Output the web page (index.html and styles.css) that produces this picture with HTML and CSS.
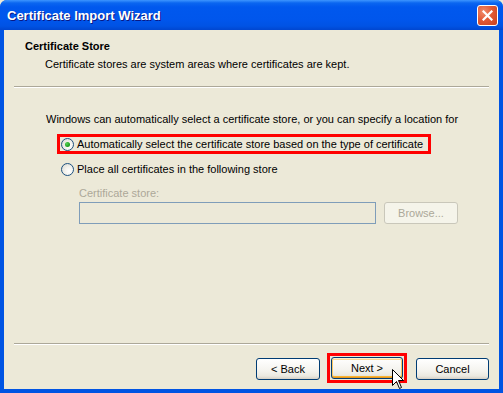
FILE: index.html
```html
<!DOCTYPE html>
<html lang="en">
<head>
    <meta charset="UTF-8" />
    <meta name="viewport" content="width=device-width, initial-scale=1.0" />
    <title>Certificate Import Wizard</title>
    <link rel="stylesheet" href="styles.css">
</head>
<body>
<div class="window">
    <div class="titlebar">
        <span class="title">Certificate Import Wizard</span>
        <button class="close-btn" aria-label="Close">
            <svg width="11" height="11" viewBox="0 0 11 11">
                <path d="M1.5 1.5 L9.5 9.5 M9.5 1.5 L1.5 9.5" stroke="#fff" stroke-width="2.2" stroke-linecap="square" />
            </svg>
        </button>
    </div>

    <div class="frame">
        <div class="header">
            <div class="header-title">Certificate Store</div>
            <div class="header-sub">Certificate stores are system areas where certificates are kept.</div>
        </div>
        <div class="sep"></div>

        <div class="content">
            <p class="intro">Windows can automatically select a certificate store, or you can specify a location for</p>
            <label class="option marked">
                <span class="radio checked"></span>Automatically select the certificate store based on the type of certificate
            </label>
            <label class="option">
                <span class="radio"></span>Place all certificates in the following store
            </label>
            <div class="store">
                <div class="store-label">Certificate store:</div>
                <div class="store-row">
                    <div class="store-input"></div>
                    <button class="btn btn-browse" disabled>Browse...</button>
                </div>
            </div>
        </div>

        <div class="sep"></div>
        <div class="footer">
            <button class="btn btn-back">&lt; Back</button>
            <span class="next-mark">
                <button class="btn btn-next">Next &gt;</button>
                <svg class="cursor" width="13" height="21" viewBox="0 0 13 21">
                    <path d="M0.5 0.5 L0.5 16.5 L4.5 12.5 L7.5 19.5 L9.5 18.5 L6.5 11.5 L11.5 11.5 Z" fill="#fff" stroke="#000" stroke-width="1" />
                </svg>
            </span>
            <button class="btn btn-cancel">Cancel</button>
        </div>
    </div>
</div>
</body>
</html>
```

FILE: styles.css
```css
* { margin: 0; padding: 0; box-sizing: border-box; }
body {
    width: 503px;
    height: 393px;
    overflow: hidden;
    background: #ece9d8;
    font-family: 'Liberation Sans', Arial, sans-serif;
    font-size: 11px;
    line-height: 13px;
    color: #000;
}
.window {
    width: 503px;
    height: 393px;
    display: flex;
    flex-direction: column;
    background: #0054e3;
    border-radius: 7px 7px 0 0;
    overflow: hidden;
}
.titlebar {
    height: 30px;
    flex: none;
    display: flex;
    align-items: center;
    justify-content: space-between;
    padding: 0 5px 0 7px;
    background: linear-gradient(to bottom, #3d95ff 0, #0a66f0 3px, #0058ee 7px, #0056ec 20px, #0053e4 26px, #0046d0 30px);
}
.title {
    color: #fff;
    font-family: 'Liberation Sans', Arial, sans-serif;
    font-weight: bold;
    font-size: 13px;
    text-shadow: 1px 1px 0 #0a1883;
    padding-top: 1px;
}
.close-btn {
    width: 21px;
    height: 21px;
    border: 1px solid #fff;
    border-radius: 3px;
    background: radial-gradient(circle at 30% 30%, #f08c6c 0, #e25a36 45%, #c7401e 100%);
    display: flex;
    align-items: center;
    justify-content: center;
    margin-top: 1px;
}
.frame {
    flex: 1;
    display: flex;
    flex-direction: column;
    background: #ece9d8;
    border: 4px solid #0054e3;
    border-top: 0;
}
.header {
    height: 56px;
    padding: 10px 0 0 21px;
}
.header-title {
    font-weight: bold;
}
.header-sub {
    margin-top: 5px;
    padding-left: 20px;
}
.sep {
    height: 2px;
    margin: 0 10px;
    border-top: 1px solid #aca899;
    border-bottom: 1px solid #fff;
    flex: none;
}
.content {
    flex: 1;
    padding: 25px 0 0 42px;
}
.intro {
    margin-bottom: 8px;
}
.option {
    display: flex;
    align-items: center;
    gap: 3px;
    width: 374px;
    height: 20px;
    margin-left: 11px;
    padding-left: 1px;
    border: 3px solid transparent;
}
.option + .option {
    margin-top: 5px;
}
.option.marked {
    border-color: #ff0000;
}
.radio {
    width: 13px;
    height: 13px;
    border-radius: 50%;
    border: 1px solid #1c5180;
    background: radial-gradient(circle at 65% 65%, #ffffff 0, #f4f3ee 40%, #d6d4cb 100%);
    display: flex;
    align-items: center;
    justify-content: center;
    flex: none;
}
.radio.checked::after {
    content: '';
    width: 5px;
    height: 5px;
    border-radius: 50%;
    background: radial-gradient(circle at 35% 35%, #55d255 0, #21a121 60%, #1a861a 100%);
}
.store {
    margin: 8px 0 0 33px;
}
.store-label {
    color: #aca899;
    margin-bottom: 2px;
}
.store-row {
    display: flex;
    align-items: center;
    gap: 8px;
}
.store-input {
    width: 297px;
    height: 22px;
    border: 1px solid #7f9db9;
    background: #ece9d8;
}
.btn {
    font-family: 'Liberation Sans', Arial, sans-serif;
    font-size: 11px;
    color: #000;
    height: 22px;
    border: 1px solid #003c74;
    border-radius: 3px;
    background: linear-gradient(to bottom, #ffffff 0, #f4f3ee 60%, #ebe9e0 85%, #d6d0c5 100%);
}
.btn-browse {
    width: 74px;
    color: #aca899;
    border-color: #c9c7ba;
    background: #f5f4ea;
}
.footer {
    height: 44px;
    flex: none;
    display: flex;
    align-items: flex-start;
    justify-content: flex-end;
    padding: 8px 10px 0 0;
}
.btn-back {
    width: 64px;
    margin-top: 5px;
    margin-right: 7px;
}
.next-mark {
    position: relative;
    display: block;
    padding: 1px;
    border: 3px solid #ff0000;
    margin-right: 9px;
}
.btn-next {
    display: block;
    width: 72px;
    box-shadow: inset 0 1px 0 #fff0cf, inset 0 -1px 0 #e5971f, inset 1px 0 0 #fbc761, inset -1px 0 0 #fbc761, inset 0 2px 0 #fcd793, inset 0 -2px 0 #f8b330;
}
.btn-cancel {
    width: 73px;
    margin-top: 5px;
}
.cursor {
    position: absolute;
    left: 62px;
    top: 13px;
}
```
